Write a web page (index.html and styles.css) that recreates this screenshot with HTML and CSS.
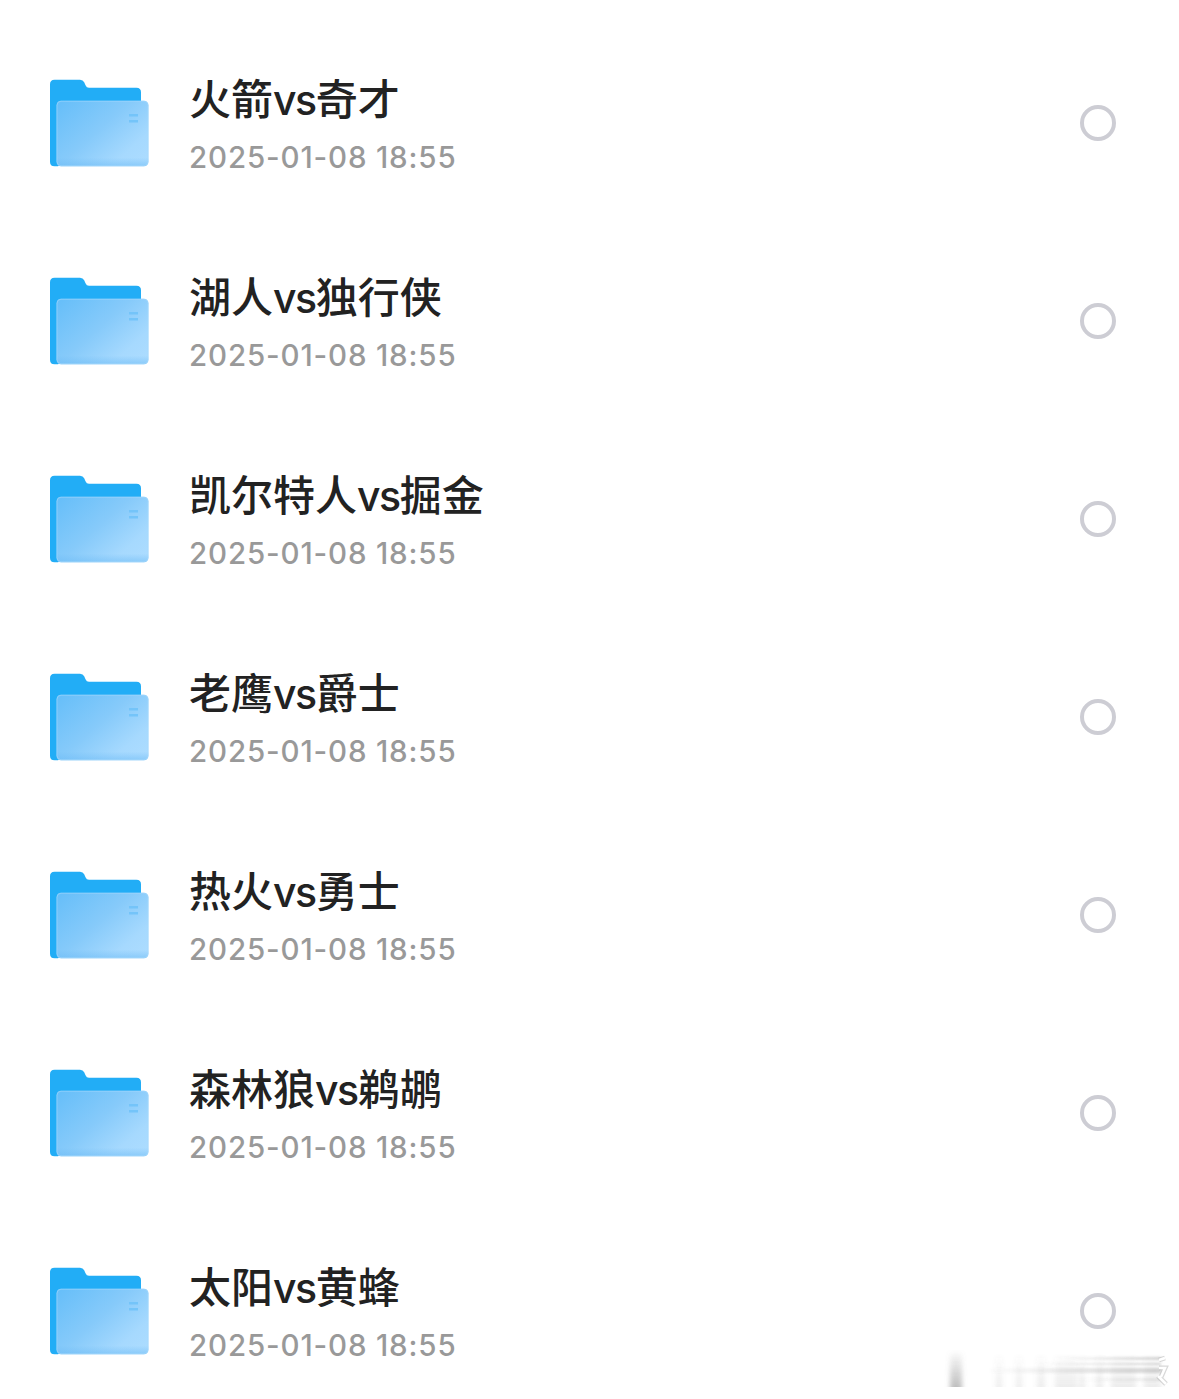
FILE: index.html
```
<!DOCTYPE html>
<html lang="zh-CN">
<head>
    <meta charset="UTF-8">
    <meta name="viewport" content="width=device-width, initial-scale=1.0">
    <title>文件列表</title>
    <link rel="stylesheet" href="styles.css">
</head>
<body>
    <!-- shared folder icon -->
    <svg class="defs" width="0" height="0">
        <defs>
            <linearGradient id="front" x1="0" y1="0.1" x2="1" y2="0.9">
                <stop offset="0" stop-color="#68bff9"/>
                <stop offset="0.45" stop-color="#86cafa"/>
                <stop offset="0.8" stop-color="#a6d9fe"/>
                <stop offset="1" stop-color="#acdcff"/>
            </linearGradient>
            <linearGradient id="shade" x1="0" y1="0" x2="0" y2="1">
                <stop offset="0.87" stop-color="#67b8f4" stop-opacity="0"/>
                <stop offset="1" stop-color="#67b8f4" stop-opacity="0.5"/>
            </linearGradient>
            <symbol id="folder" viewBox="0 0 100 88">
                <path d="M5.500 0.700H31Q34 0.700 35.200 3.200L36.500 6.200Q37.500 8.700 40 8.700H87.500Q92 8.700 92 13.200V80H20L9 87.200H5.500Q1 87.200 1 82.700V5.200Q1 0.700 5.500 0.700Z" fill="#22adf6"/>
                <rect x="7.500" y="21.700" width="92" height="65.500" rx="4.500" fill="url(#front)"/>
                <rect x="7.500" y="21.700" width="92" height="65.500" rx="4.500" fill="url(#shade)"/>
                <rect x="8" y="22.200" width="91" height="64.500" rx="4" fill="none" stroke="#a5d9fc" stroke-opacity="0.6"/>
                <path d="M80 36.300H89M80 42.300H89" stroke="#74c4f9" stroke-width="2.600"/>
            </symbol>
        </defs>
    </svg>

    <ul class="file-list">
        <li class="file-item">
            <svg class="folder"><use href="#folder"/></svg>
            <div class="info">
                <div class="name">火箭<span>vs</span>奇才</div>
                <div class="date">2025-01-08 18:55</div>
            </div>
            <span class="check"></span>
        </li>
        <li class="file-item">
            <svg class="folder"><use href="#folder"/></svg>
            <div class="info">
                <div class="name">湖人<span>vs</span>独行侠</div>
                <div class="date">2025-01-08 18:55</div>
            </div>
            <span class="check"></span>
        </li>
        <li class="file-item">
            <svg class="folder"><use href="#folder"/></svg>
            <div class="info">
                <div class="name">凯尔特人<span>vs</span>掘金</div>
                <div class="date">2025-01-08 18:55</div>
            </div>
            <span class="check"></span>
        </li>
        <li class="file-item">
            <svg class="folder"><use href="#folder"/></svg>
            <div class="info">
                <div class="name">老鹰<span>vs</span>爵士</div>
                <div class="date">2025-01-08 18:55</div>
            </div>
            <span class="check"></span>
        </li>
        <li class="file-item">
            <svg class="folder"><use href="#folder"/></svg>
            <div class="info">
                <div class="name">热火<span>vs</span>勇士</div>
                <div class="date">2025-01-08 18:55</div>
            </div>
            <span class="check"></span>
        </li>
        <li class="file-item">
            <svg class="folder"><use href="#folder"/></svg>
            <div class="info">
                <div class="name">森林狼<span>vs</span>鹈鹕</div>
                <div class="date">2025-01-08 18:55</div>
            </div>
            <span class="check"></span>
        </li>
        <li class="file-item">
            <svg class="folder"><use href="#folder"/></svg>
            <div class="info">
                <div class="name">太阳<span>vs</span>黄蜂</div>
                <div class="date">2025-01-08 18:55</div>
            </div>
            <span class="check"></span>
        </li>
    </ul>

    <!-- faded smudge in the bottom corner -->
    <svg class="smudge" width="240" height="37" viewBox="0 0 240 37">
        <defs>
            <linearGradient id="fade" x1="0" y1="0" x2="0" y2="1">
                <stop offset="0" stop-color="#777" stop-opacity="0"/>
                <stop offset="1" stop-color="#777" stop-opacity="0.5"/>
            </linearGradient>
            <linearGradient id="band" x1="0" y1="0" x2="1" y2="0">
                <stop offset="0" stop-color="#777" stop-opacity="0"/>
                <stop offset="1" stop-color="#777" stop-opacity="0.3"/>
            </linearGradient>
            <filter id="soft" x="-10%" y="-20%" width="120%" height="140%">
                <feGaussianBlur stdDeviation="2.500 0.500"/>
            </filter>
            <filter id="soft-band" x="-10%" y="-20%" width="120%" height="140%">
                <feGaussianBlur stdDeviation="1 1.200"/>
            </filter>
        </defs>
        <g filter="url(#soft)">
            <rect x="12" y="0" width="12" height="39" fill="url(#fade)"/>
            <g fill="url(#fade)" opacity="0.28">
                <rect x="58" y="3" width="6" height="36"/>
                <rect x="78" y="3" width="6" height="36"/>
                <rect x="99" y="3" width="8" height="36"/>
                <rect x="117" y="3" width="22" height="36"/>
                <rect x="141" y="3" width="6" height="36"/>
                <rect x="158" y="3" width="7" height="36"/>
                <rect x="173" y="3" width="25" height="36"/>
                <rect x="206" y="3" width="17" height="36"/>
            </g>
        </g>
        <g fill="url(#band)" filter="url(#soft-band)">
            <rect x="120" y="7" width="103" height="3"/>
            <rect x="100" y="13" width="123" height="2"/>
            <rect x="50" y="18" width="173" height="5"/>
            <rect x="140" y="28" width="83" height="3" opacity="0.5"/>
        </g>
        <path d="M221 10L227 8M221 18H227L223 27M220 26L228 34" fill="none" stroke="#aaa" stroke-width="5" stroke-opacity="0.45"/>
        <path d="M221 10L227 8M221 18H227L223 27M220 26L228 34" fill="none" stroke="#fff" stroke-width="2.500"/>
    </svg>
</body>
</html>
```

FILE: styles.css
```
* {
    box-sizing: border-box;
}

body {
    font-family: Inter, "Noto Sans CJK SC", sans-serif;
    background-color: #fff;
    color: #222;
    margin: 0;
    height: 1399px;
    overflow: hidden;
    position: relative;
}

.defs {
    display: block;
}

.file-list {
    list-style: none;
    margin: 0;
    padding: 24px 63px 0 49px;
}

.file-item {
    display: flex;
    align-items: center;
    height: 198px;
}

.folder {
    width: 100px;
    height: 88px;
    flex: none;
}

.info {
    flex: 1;
    margin-left: 40px;
    padding-bottom: 4px;
}

.name {
    font-family: "Noto Sans CJK SC", sans-serif;
    font-size: 42px;
    font-weight: 500;
    line-height: 60px;
    white-space: nowrap;
}

.name span {
    font-family: Inter, sans-serif;
    font-size: 41px;
    letter-spacing: -1.5px;
}

.date {
    color: #999;
    font-size: 29.5px;
    font-weight: 500;
    line-height: 36px;
    margin-top: 9px;
    letter-spacing: 0.85px;
}

.check {
    width: 36px;
    height: 36px;
    border: 4px solid #cdcdd4;
    border-radius: 50%;
}

.smudge {
    position: absolute;
    left: 938px;
    top: 1350px;
}
```
